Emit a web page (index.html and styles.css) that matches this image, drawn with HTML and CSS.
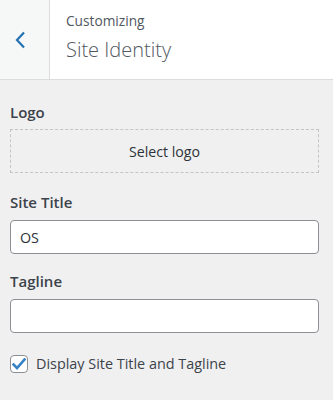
FILE: index.html
```html
<!DOCTYPE html>
<html lang="en">
<head>
<meta charset="utf-8">
<title>Site Identity</title>
<link rel="stylesheet" href="styles.css">
</head>
<body>
<div class="panel">
  <header class="head">
    <button class="back" aria-label="Back">
      <svg width="12" height="18" viewBox="0 0 12 18" aria-hidden="true"><polyline points="9,1.5 2,9 9,16.5" fill="none" stroke="#2271b1" stroke-width="2.2" stroke-linejoin="miter"/></svg>
    </button>
    <div class="info">
      <div class="crumb">Customizing</div>
      <div class="title">Site Identity</div>
    </div>
  </header>
  <main class="controls">
    <div class="control">
      <div class="label">Logo</div>
      <div class="dropzone">Select logo</div>
    </div>
    <div class="control gap">
      <div class="label">Site Title</div>
      <div class="field">OS</div>
    </div>
    <div class="control gap2">
      <div class="label">Tagline</div>
      <div class="field"></div>
    </div>
    <label class="check">
      <span class="box"><svg width="14" height="12" viewBox="0 0 14 12" aria-hidden="true"><polyline points="1.5,6.5 5,10 12.5,1.5" fill="none" stroke="#3582c4" stroke-width="2.6" stroke-linecap="square"/></svg></span>
      <span class="check-text">Display Site Title and Tagline</span>
    </label>
  </main>
</div>
</body>
</html>
```

FILE: styles.css
```css
html, body {
  margin: 0;
  padding: 0;
}
body {
  width: 333px;
  height: 400px;
  background: #f0f0f1;
  font-family: "Open Sans", "Noto Sans", sans-serif;
  color: #3c434a;
  overflow: hidden;
}
.head {
  display: flex;
  height: 79px;
  background: #fff;
  border-bottom: 1px solid #dcdcde;
}
.back {
  box-sizing: content-box;
  width: 34px;
  height: 79px;
  margin: 0;
  padding: 0 0 0 15px;
  display: flex;
  align-items: center;
  background: #f6f7f7;
  border: 0;
  border-right: 1px solid #dcdcde;
}
.info {
  padding: 12px 0 0 16px;
  color: #50575e;
}
.crumb {
  font-size: 13.7px;
  line-height: 18px;
}
.title {
  margin-top: 7px;
  font-size: 20px;
  font-weight: 300;
  line-height: 26px;
}
.controls {
  padding: 22px 14px 0 10px;
}
.label {
  font-size: 15px;
  font-weight: 570;
  line-height: 20px;
  color: #3c434a;
}
.dropzone {
  margin-top: 7px;
  height: 42px;
  border: 1px dashed #c3c4c7;
  display: flex;
  align-items: center;
  justify-content: center;
  font-size: 14.2px;
  color: #2c3338;
}
.gap {
  margin-top: 19px;
}
.gap2 {
  margin-top: 17px;
}
.field {
  margin-top: 8px;
  height: 32px;
  background: #fff;
  border: 1px solid #8c8f94;
  border-radius: 4px;
  padding: 0 9px;
  display: flex;
  align-items: center;
  font-size: 14.3px;
  color: #2c3338;
}
.check {
  margin-top: 21px;
  display: flex;
  align-items: center;
  gap: 8px;
}
.box {
  width: 16px;
  height: 16px;
  background: #fff;
  border: 1px solid #8c8f94;
  border-radius: 4px;
  display: flex;
  align-items: center;
  justify-content: center;
}
.check-text {
  font-size: 14.4px;
  line-height: 20px;
  color: #3c434a;
}
```
